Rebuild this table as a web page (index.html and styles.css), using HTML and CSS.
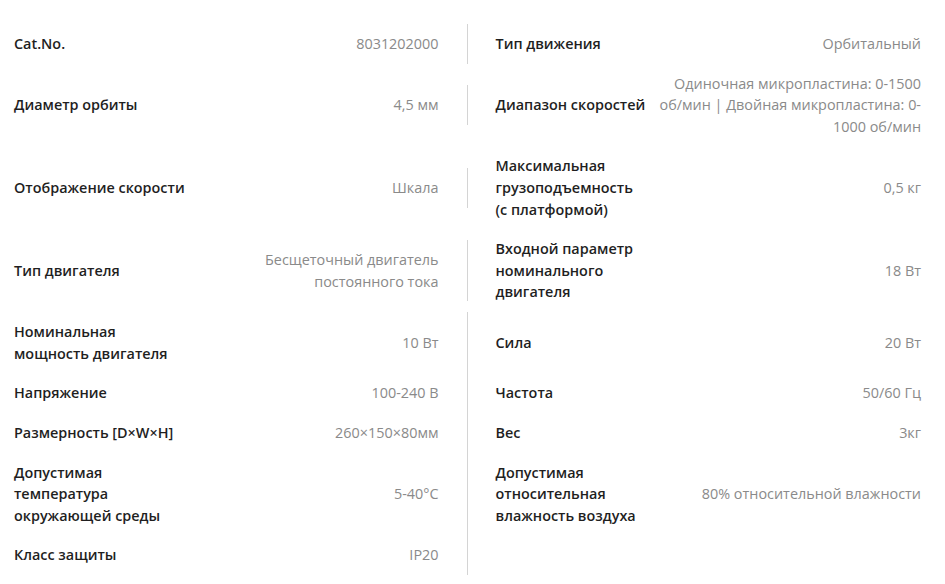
FILE: index.html
```html
<!DOCTYPE html>
<html lang="ru">
<head>
<meta charset="utf-8">
<title>Характеристики</title>
<link rel="stylesheet" href="styles.css">
</head>
<body>
<div class="specs">
  <div class="item left"><div class="label">Cat.No.</div><div class="value">8031202000</div></div>
  <div class="item right"><div class="label">Тип движения</div><div class="value">Орбитальный</div></div>

  <div class="item left"><div class="label">Диаметр орбиты</div><div class="value">4,5 мм</div></div>
  <div class="item right"><div class="label">Диапазон скоростей</div><div class="value">Одиночная микропластина: 0-1500 об/мин | Двойная микропластина: 0-1000 об/мин</div></div>

  <div class="item left"><div class="label">Отображение скорости</div><div class="value">Шкала</div></div>
  <div class="item right"><div class="label">Максимальная грузоподъемность (с&nbsp;платформой)</div><div class="value">0,5 кг</div></div>

  <div class="item left"><div class="label">Тип двигателя</div><div class="value">Бесщеточный двигатель постоянного тока</div></div>
  <div class="item right"><div class="label">Входной параметр номинального двигателя</div><div class="value">18 Вт</div></div>

  <div class="item left"><div class="label">Номинальная мощность двигателя</div><div class="value">10 Вт</div></div>
  <div class="item right"><div class="label">Сила</div><div class="value">20 Вт</div></div>

  <div class="item left"><div class="label">Напряжение</div><div class="value">100-240 В</div></div>
  <div class="item right"><div class="label">Частота</div><div class="value">50/60 Гц</div></div>

  <div class="item left"><div class="label">Размерность [D×W×H]</div><div class="value">260×150×80мм</div></div>
  <div class="item right"><div class="label">Вес</div><div class="value">3кг</div></div>

  <div class="item left"><div class="label">Допустимая температура окружающей среды</div><div class="value">5-40°C</div></div>
  <div class="item right"><div class="label">Допустимая относительная влажность воздуха</div><div class="value">80% относительной влажности</div></div>

  <div class="item left"><div class="label">Класс защиты</div><div class="value">IP20</div></div>
  <div class="item right empty"></div>
</div>
</body>
</html>
```

FILE: styles.css
```css
html, body {
  margin: 0;
  padding: 0;
  background: #ffffff;
}

body {
  font-family: "Open Sans", "Liberation Sans", sans-serif;
  font-size: 14.4px;
  line-height: 1.5;
}

.specs {
  display: grid;
  grid-template-columns: 1fr 1fr;
  align-items: center;
  padding: 24px 24px 0 14px;
}

.item {
  display: flex;
  align-items: center;
  justify-content: space-between;
  gap: 12px;
  padding-top: 9px;
  padding-bottom: 9px;
}

.item.left {
  padding-right: 28px;
  border-right: 1px solid #d4d4d4;
}

.item.right {
  padding-left: 28px;
}

.label {
  flex-shrink: 0;
  max-width: 176px;
  font-weight: 600;
  color: #1f1f1f;
}

.value {
  max-width: 264px;
  text-align: right;
  color: #8a8a8a;
}
```
